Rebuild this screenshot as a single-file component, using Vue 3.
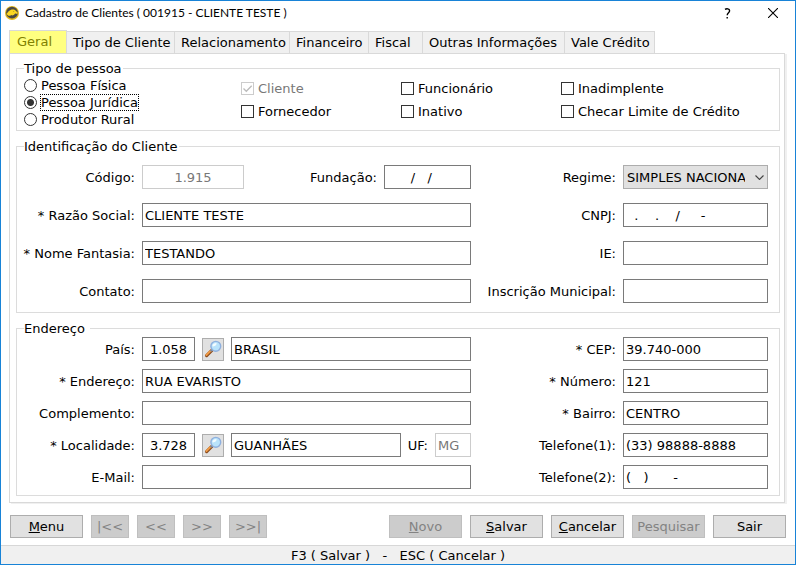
<script setup>
import { ref } from 'vue'

const tabs = [
  'Geral',
  'Tipo de Cliente',
  'Relacionamento',
  'Financeiro',
  'Fiscal',
  'Outras Informações',
  'Vale Crédito',
]
const activeTab = ref('Geral')

const personTypes = ['Pessoa Física', 'Pessoa Jurídica', 'Produtor Rural']
const personType = ref('Pessoa Jurídica')

const flags = ref([
  { label: 'Cliente', checked: true, disabled: true },
  { label: 'Funcionário', checked: false },
  { label: 'Inadimplente', checked: false },
  { label: 'Fornecedor', checked: false },
  { label: 'Inativo', checked: false },
  { label: 'Checar Limite de Crédito', checked: false },
])

const navButtons = [
  { text: '|<<', title: 'Primeiro' },
  { text: '<<', title: 'Anterior' },
  { text: '>>', title: 'Próximo' },
  { text: '>>|', title: 'Último' },
]

const form = ref({
  codigo: '1.915',
  fundacao: '   /   /      ',
  regime: 'SIMPLES NACIONAL',
  razao: 'CLIENTE TESTE',
  cnpj: '  .    .    /     -',
  fantasia: 'TESTANDO',
  ie: '',
  contato: '',
  inscricao: '',
  paisCodigo: '1.058',
  pais: 'BRASIL',
  cep: '39.740-000',
  endereco: 'RUA EVARISTO',
  numero: '121',
  complemento: '',
  bairro: 'CENTRO',
  cidadeCodigo: '3.728',
  cidade: 'GUANHÃES',
  uf: 'MG',
  telefone1: '(33) 98888-8888',
  email: '',
  telefone2: '(   )      -',
})
</script>

<template>
  <div class="window">
    <header class="titlebar">
      <svg class="logo" viewBox="0 0 14 14" aria-hidden="true">
        <circle cx="7" cy="7" r="7" fill="#e3b81e" />
        <circle cx="7" cy="6.700" r="5.900" fill="#4a4944" />
        <path d="M1.400 8C2.600 6.600 3.600 4.800 5.600 4c1.900-.8 4.200-.4 5.200.8.300.5.700.8 1.700 1.500.4.400.2 1.300-.4 1.800-.4-.6-1-.8-1.700-.7-.8.200-1 1-1.800 1.600-.9.600-1.900.5-2.500-.1-.5.900-1.500 1.100-2.700.9z" fill="#fbd722" />
        <circle cx="8.800" cy="5.700" r=".4" fill="#4a4944" />
      </svg>
      <h1 class="title">Cadastro de Clientes ( 001915 - CLIENTE TESTE )</h1>
      <button type="button" class="caption-btn" aria-label="Ajuda">
        <svg width="7" height="11" viewBox="0 0 7 11" fill="none" stroke="#000" stroke-width="1.400">
          <path d="M1 1.400C2.400.5 5.600.4 5.600 2.800c0 1.900-2.400 2-2.400 4.400" />
          <path d="M3.200 9v1.600" />
        </svg>
      </button>
      <button type="button" class="caption-btn" aria-label="Fechar">
        <svg width="10" height="10" viewBox="0 0 10 10" stroke="#000" stroke-width="1.100">
          <path d="M0 0l10 10M10 0L0 10" />
        </svg>
      </button>
    </header>

    <nav class="tabs" role="tablist">
      <button
        v-for="tab in tabs"
        :key="tab"
        type="button"
        role="tab"
        class="tab"
        :class="{ active: tab === activeTab }"
        :aria-selected="tab === activeTab"
        @click="activeTab = tab"
      >{{ tab }}</button>
    </nav>

    <main class="panel">
      <fieldset class="group">
        <legend>Tipo de pessoa</legend>
        <div class="types">
          <div class="radios">
            <label v-for="type in personTypes" :key="type" class="choice">
              <input v-model="personType" type="radio" name="tipo" class="radio" :value="type" />
              <span class="choice-text" :class="{ focused: type === personType }">{{ type }}</span>
            </label>
          </div>
          <div class="flags">
            <label v-for="flag in flags" :key="flag.label" class="choice" :class="{ muted: flag.disabled }">
              <span class="box">
                <input v-model="flag.checked" type="checkbox" class="check" :disabled="flag.disabled" />
                <svg v-if="flag.checked" class="tick" viewBox="0 0 13 13" fill="none" stroke="currentColor" stroke-width="1.300">
                  <path d="M2.500 6.500l2.800 2.800 5.400-5.600" />
                </svg>
              </span>
              <span class="choice-text">{{ flag.label }}</span>
            </label>
          </div>
        </div>
      </fieldset>

      <fieldset class="group">
        <legend>Identificação do Cliente</legend>
        <div class="fields roomy">
          <label for="codigo">Código:</label>
          <div class="combo">
            <input id="codigo" v-model="form.codigo" class="field code center" disabled />
            <label for="fundacao" class="push">Fundação:</label>
            <input id="fundacao" v-model="form.fundacao" class="field date center" />
          </div>
          <label for="regime">Regime:</label>
          <div class="select-wrap">
            <select id="regime" v-model="form.regime" class="field select">
              <option>SIMPLES NACIONAL</option>
              <option>LUCRO PRESUMIDO</option>
              <option>LUCRO REAL</option>
            </select>
            <svg class="chevron" viewBox="0 0 9 5" fill="none" stroke="#444" stroke-width="1.100">
              <path d="M.5.5l4 4 4-4" />
            </svg>
          </div>

          <label for="razao">* Razão Social:</label>
          <input id="razao" v-model="form.razao" class="field" />
          <label for="cnpj">CNPJ:</label>
          <input id="cnpj" v-model="form.cnpj" class="field" />

          <label for="fantasia">* Nome Fantasia:</label>
          <input id="fantasia" v-model="form.fantasia" class="field" />
          <label for="ie">IE:</label>
          <input id="ie" v-model="form.ie" class="field" />

          <label for="contato">Contato:</label>
          <input id="contato" v-model="form.contato" class="field" />
          <label for="inscricao">Inscrição Municipal:</label>
          <input id="inscricao" v-model="form.inscricao" class="field" />
        </div>
      </fieldset>

      <fieldset class="group">
        <legend class="wide">Endereço</legend>
        <div class="fields">
          <label for="pais-codigo">País:</label>
          <div class="combo">
            <input id="pais-codigo" v-model="form.paisCodigo" class="field short center" />
            <button type="button" class="search" aria-label="Pesquisar país">
              <svg width="18" height="18" viewBox="0 0 18 18" aria-hidden="true">
                <path d="M2.600 15.600l5.200-5.200" stroke="#8a4a1c" stroke-width="3.200" stroke-linecap="round" />
                <path d="M2.400 15l5-5" stroke="#f09a45" stroke-width="1.900" stroke-linecap="round" />
                <path d="M6.600 11.200l1.800-1.800" stroke="#7d8797" stroke-width="2" />
                <circle cx="11.800" cy="6.300" r="4.900" fill="#b9e3fb" stroke="#8fb0de" stroke-width="1.400" />
                <path d="M8.300 6.300c.3-2.200 1.800-3.300 4.100-3.300.8 2-1.700 3.800-4.100 3.300z" fill="#f4fcff" />
              </svg>
            </button>
            <input v-model="form.pais" aria-label="Nome do país" class="field grow" />
          </div>
          <label for="cep">* CEP:</label>
          <input id="cep" v-model="form.cep" class="field" />

          <label for="endereco">* Endereço:</label>
          <input id="endereco" v-model="form.endereco" class="field" />
          <label for="numero">* Número:</label>
          <input id="numero" v-model="form.numero" class="field" />

          <label for="complemento">Complemento:</label>
          <input id="complemento" v-model="form.complemento" class="field" />
          <label for="bairro">* Bairro:</label>
          <input id="bairro" v-model="form.bairro" class="field" />

          <label for="cidade-codigo">* Localidade:</label>
          <div class="combo">
            <input id="cidade-codigo" v-model="form.cidadeCodigo" class="field short center" />
            <button type="button" class="search" aria-label="Pesquisar localidade">
              <svg width="18" height="18" viewBox="0 0 18 18" aria-hidden="true">
                <path d="M2.600 15.600l5.200-5.200" stroke="#8a4a1c" stroke-width="3.200" stroke-linecap="round" />
                <path d="M2.400 15l5-5" stroke="#f09a45" stroke-width="1.900" stroke-linecap="round" />
                <path d="M6.600 11.200l1.800-1.800" stroke="#7d8797" stroke-width="2" />
                <circle cx="11.800" cy="6.300" r="4.900" fill="#b9e3fb" stroke="#8fb0de" stroke-width="1.400" />
                <path d="M8.300 6.300c.3-2.200 1.800-3.300 4.100-3.300.8 2-1.700 3.800-4.100 3.300z" fill="#f4fcff" />
              </svg>
            </button>
            <input v-model="form.cidade" aria-label="Nome da localidade" class="field grow" />
            <label for="uf">UF:</label>
            <input id="uf" v-model="form.uf" class="field uf" disabled />
          </div>
          <label for="telefone1">Telefone(1):</label>
          <input id="telefone1" v-model="form.telefone1" class="field" />

          <label for="email">E-Mail:</label>
          <input id="email" v-model="form.email" class="field" />
          <label for="telefone2">Telefone(2):</label>
          <input id="telefone2" v-model="form.telefone2" class="field" />
        </div>
      </fieldset>
    </main>

    <div class="actions">
      <button type="button" class="btn"><u>M</u>enu</button>
      <button v-for="nav in navButtons" :key="nav.text" type="button" class="btn nav" :aria-label="nav.title" disabled>{{ nav.text }}</button>
      <span class="spacer"></span>
      <button type="button" class="btn" disabled><u>N</u>ovo</button>
      <button type="button" class="btn"><u>S</u>alvar</button>
      <button type="button" class="btn"><u>C</u>ancelar</button>
      <button type="button" class="btn" disabled>Pesquisar</button>
      <button type="button" class="btn">Sair</button>
    </div>

    <footer class="status">F3 ( Salvar )&nbsp;&nbsp; -&nbsp;&nbsp; ESC ( Cancelar )</footer>
  </div>
</template>

<style>
body {
  background: #fff;
}
</style>

<style scoped>
.window,
.window * {
  box-sizing: border-box;
}

.window {
  display: flex;
  flex-direction: column;
  min-height: 100vh;
  border: 1px solid #1883d7;
  background: #fff;
  color: #000;
  font: 13px/17px "DejaVu Sans", Verdana, sans-serif;
}

button,
input,
select {
  margin: 0;
  font: inherit;
  color: inherit;
}

.titlebar {
  display: flex;
  align-items: center;
  height: 24px;
  padding-left: 4px;
}

.logo {
  width: 14px;
  height: 14px;
}

.title {
  flex: 1;
  margin: 0 0 0 6px;
  font: 12px/16px Lato, "Segoe UI", sans-serif;
}

.caption-btn {
  display: flex;
  align-items: center;
  justify-content: center;
  width: 45px;
  height: 24px;
  padding: 0;
  border: 0;
  background: none;
}

.tabs {
  display: grid;
  grid-template-columns: 58px 108px 115px 79px 54px 142px 90px;
  align-items: end;
  height: 23px;
  margin: 5px 10px 0 8px;
}

.tab {
  height: 22px;
  padding: 0 0 0 6px;
  border: 1px solid #d9d9d9;
  border-left: 0;
  border-bottom: 0;
  background: #f0f0f0;
  text-align: left;
  white-space: nowrap;
}

.tab.active {
  height: 23px;
  padding: 0 0 2px 7px;
  border-left: 1px solid #d9d9d9;
  background: #ffff80;
  color: #808000;
}

.panel {
  display: flex;
  flex-direction: column;
  gap: 7px;
  margin: 0 10px 0 8px;
  padding: 6px 4px 6px 6px;
  border: 1px solid #d9d9d9;
  box-shadow: 2px 1px 0 #f0f0f0;
}

.group {
  min-width: 0;
  margin: 0;
  padding: 0;
  border: 1px solid #dcdcdc;
}

legend {
  margin-left: 7px;
  padding: 0 1px 0 0;
}

legend.wide {
  padding-right: 5px;
}

.types {
  display: grid;
  grid-template-columns: 217fr 538fr;
  padding: 0 0 2px 7px;
}

.radios {
  display: flex;
  flex-direction: column;
}

.flags {
  display: grid;
  grid-template-columns: 160fr 160fr 218fr;
  grid-auto-rows: 23px;
}

.choice {
  display: flex;
  align-items: center;
  gap: 3px;
}

.choice-text {
  padding: 0 1px;
  white-space: nowrap;
}

.choice-text.focused {
  outline: 1px dotted #000;
  outline-offset: -1px;
}

.muted {
  color: #787878;
}

.radio {
  appearance: none;
  width: 13px;
  height: 13px;
  border: 1px solid #333;
  border-radius: 50%;
  background: #fff;
}

.radio:checked {
  background: radial-gradient(circle, #333 3px, #fff 4px);
}

.box {
  position: relative;
  display: flex;
}

.check {
  appearance: none;
  width: 13px;
  height: 13px;
  border: 1px solid #333;
  background: #fff;
}

.check:disabled {
  border-color: #ccc;
}

.tick {
  position: absolute;
  inset: 0;
  color: #bbb;
  pointer-events: none;
}

.fields {
  display: grid;
  grid-template-columns: 118px minmax(0, 1fr) 138px 145px;
  align-items: center;
  gap: 8px 7px;
  padding: 0 11px 6px 0;
}

.fields.roomy {
  row-gap: 14px;
  padding-top: 10px;
  padding-bottom: 9px;
}

.fields label {
  text-align: right;
  white-space: nowrap;
}

.combo {
  display: flex;
  align-items: center;
  gap: 7px;
}

.push {
  margin-left: auto;
}

.field {
  display: block;
  width: 100%;
  min-width: 0;
  height: 24px;
  padding: 0 2px;
  border: 1px solid #7a7a7a;
  border-radius: 0;
  background: #fff;
}

.field:disabled {
  border-color: #ccc;
  color: #787878;
}

.center {
  text-align: center;
}

.code {
  width: 102px;
}

.date {
  width: 87px;
}

.short {
  width: 53px;
}

.uf {
  width: 36px;
}

.grow {
  flex: 1;
}

.search {
  display: flex;
  flex: none;
  align-items: center;
  justify-content: center;
  width: 22px;
  height: 23px;
  padding: 0;
  border: 1px solid #adadad;
  background: #e1e1e1;
}

.select-wrap {
  position: relative;
}

.select {
  appearance: none;
  padding: 0 22px 0 3px;
  border-color: #adadad;
  background: #e1e1e1;
}

.chevron {
  position: absolute;
  top: 10px;
  right: 4px;
  width: 9px;
  height: 5px;
  pointer-events: none;
}

.actions {
  display: flex;
  gap: 8px;
  margin-top: auto;
  padding: 12px 9px 7px;
}

.btn {
  width: 73px;
  height: 23px;
  padding: 0;
  border: 1px solid #adadad;
  background: #e1e1e1;
  white-space: nowrap;
}

.btn:disabled {
  border-color: #bfbfbf;
  background: #ccc;
  color: #838383;
}

.nav {
  width: 38px;
}

.spacer {
  flex: 1;
}

.status {
  height: 19px;
  border-top: 1px solid #d7d7d7;
  background: #f0f0f0;
  line-height: 19px;
  text-align: center;
}
</style>
